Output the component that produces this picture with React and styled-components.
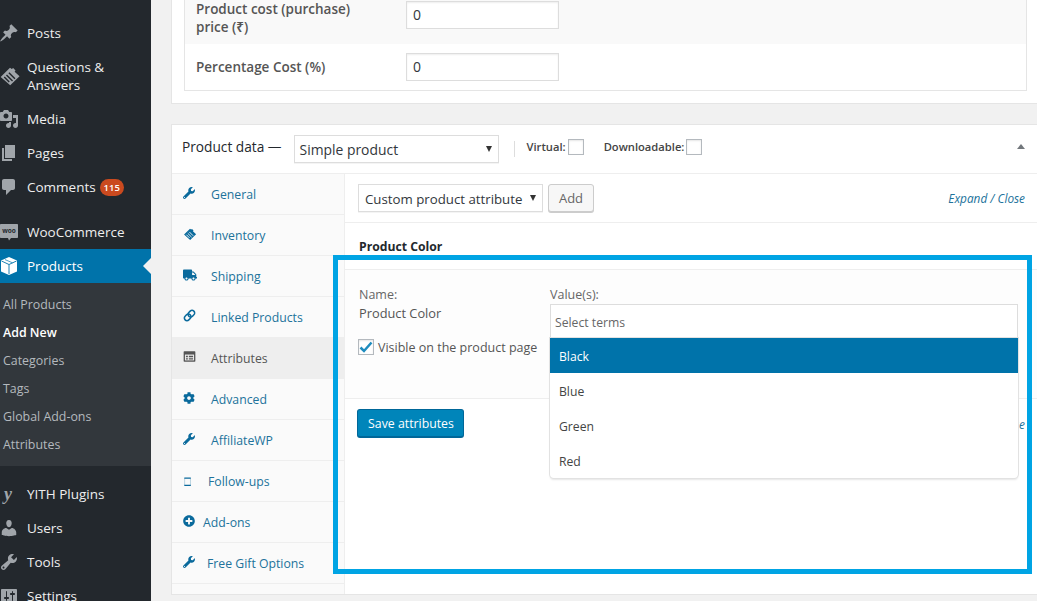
import React from 'react';
import styled, { createGlobalStyle } from 'styled-components';
import { FaWrench, FaTruck, FaCog, FaPlusCircle } from 'react-icons/fa';

const GlobalStyle = createGlobalStyle`
  html, body {
    margin: 0;
    height: 100%;
    overflow: hidden;
    background: #f1f1f1;
  }
  * {
    box-sizing: border-box;
  }
`;

const Page = styled.div`
  display: flex;
  width: 1037px;
  height: 601px;
  overflow: hidden;
  font-family: "Open Sans", "Noto Sans", sans-serif;
  font-size: 13px;
  color: #444;
`;

const Sidebar = styled.nav`
  flex: 0 0 151px;
  height: 601px;
  overflow: hidden;
  padding-top: 16px;
  background: #23282d;
`;

const MenuItem = styled.div`
  position: relative;
  display: flex;
  align-items: center;
  height: ${props => props.$tall ? '52px' : '34px'};
  line-height: 18px;
  font-size: 13.5px;
  color: ${props => props.$active ? '#fff' : '#eee'};
  background: ${props => props.$active ? '#0073aa' : 'transparent'};
`;

const MenuIcon = styled.span`
  flex: 0 0 27px;
  width: 27px;
  min-width: 0;
  display: flex;
  align-items: center;
  color: ${props => props.$active ? '#fff' : '#a0a5aa'};

  svg {
    display: block;
    flex: none;
    margin-left: -1px;
    fill: currentColor;
  }
`;

const YithGlyph = styled.span`
  padding-left: 4px;
  font-family: "Liberation Serif", serif;
  font-size: 18px;
  font-style: italic;
  font-weight: 700;
  line-height: 18px;
`;

const Badge = styled.span`
  margin-left: 4px;
  width: 24px;
  height: 17px;
  border-radius: 9px;
  background: #ca4a1f;
  color: #fff;
  font-size: 9.5px;
  font-weight: 600;
  line-height: 17px;
  text-align: center;
`;

const CurrentArrow = styled.span`
  position: absolute;
  right: 0;
  top: 9px;
  border: 8px solid transparent;
  border-left-width: 0;
  border-right-color: #f1f1f1;
`;

const Separator = styled.div`
  height: 11px;
`;

const SubMenu = styled.div`
  padding: 8px 0 7px 3px;
  background: #32373c;
`;

const SubItem = styled.div`
  height: 28px;
  line-height: 28px;
  font-size: 12.4px;
  font-weight: ${props => props.$current ? 600 : 400};
  color: ${props => props.$current ? '#fff' : '#b4b9be'};
`;

const Main = styled.main`
  flex: 1;
  min-width: 0;
  padding-left: 20px;
`;

const CostPanel = styled.section`
  height: 104px;
  padding: 0 10px 0 12px;
  background: #fff;
  border-left: 1px solid #e5e5e5;
  border-bottom: 1px solid #e5e5e5;
`;

const CostTable = styled.div`
  border: 1px solid #e5e5e5;
  border-top: 0;
`;

const CostRow = styled.div`
  display: flex;
  align-items: ${props => props.$alt ? 'flex-start' : 'center'};
  height: ${props => props.$alt ? '44px' : '46px'};
  padding: ${props => props.$alt ? '1px 0 0 11px' : '0 0 0 11px'};
  background: ${props => props.$alt ? '#f9f9f9' : '#fff'};
`;

const CostLabel = styled.label`
  flex: 0 0 210px;
  padding-right: 40px;
  margin-top: ${props => props.$alt ? '-1px' : '0'};
  font-size: 13.5px;
  font-weight: 600;
  line-height: 18px;
  color: #555;
`;

const CostInput = styled.div`
  width: 153px;
  height: 28px;
  padding-left: 6px;
  border: 1px solid #ddd;
  background: #fff;
  box-shadow: inset 0 1px 2px rgba(0, 0, 0, 0.07);
  font-size: 14px;
  line-height: 26px;
  color: #32373c;
`;

const DataPanel = styled.section`
  position: relative;
  height: 471px;
  margin-top: 20px;
  background: #fff;
  border: 1px solid #e5e5e5;
  border-right: 0;
`;

const DataHeader = styled.header`
  display: flex;
  align-items: center;
  height: 49px;
  padding: 0 12px 0 10px;
  border-bottom: 1px solid #eee;
`;

const DataTitle = styled.h2`
  margin: -5px 12px 0 0;
  font-size: 13.7px;
  font-weight: 400;
  color: #23282d;
  white-space: nowrap;
`;

const SelectBox = styled.div`
  display: flex;
  align-items: center;
  justify-content: space-between;
  flex: none;
  width: ${props => props.$wide ? '205px' : '185px'};
  height: 28px;
  padding: ${props => props.$wide ? '0 6px 0 5px' : '1px 6px 0 6px'};
  background: #fff;
  border: 1px solid #ddd;
  box-shadow: 0 1px 0 #f4f4f4;
  font-size: ${props => props.$wide ? '13.9px' : '13.25px'};
  color: #32373c;
  white-space: nowrap;
`;

const SelectArrow = styled.span`
  width: 0;
  height: 0;
  margin-top: -1px;
  border-left: 3.5px solid transparent;
  border-right: 3.5px solid transparent;
  border-top: 6px solid #333;
`;

const HeaderDivider = styled.span`
  width: 1px;
  height: 16px;
  margin: 0 12px 0 15px;
  background: #ddd;
`;

const CheckLabel = styled.label`
  display: flex;
  align-items: center;
  margin-right: ${props => props.$gap || 0}px;
  margin-top: -5px;
  font-size: 11.2px;
  font-weight: 600;
  color: #444;
`;

const Check = styled.span`
  display: inline-flex;
  align-items: center;
  justify-content: center;
  flex: none;
  width: 16px;
  height: 16px;
  margin-left: 2px;
  background: #fff;
  border: 1px solid #b4b9be;
  box-shadow: inset 0 1px 2px rgba(0, 0, 0, 0.1);
`;

const Collapse = styled.span`
  margin-left: auto;
  margin-top: -5px;
  width: 0;
  height: 0;
  border-left: 4px solid transparent;
  border-right: 4px solid transparent;
  border-bottom: 5px solid #72777c;
`;

const DataBody = styled.div`
  display: flex;
  height: 420px;
`;

const Tabs = styled.ul`
  flex: 0 0 173px;
  margin: 0;
  padding: 0;
  list-style: none;
  background: #fafafa;
  border-right: 1px solid #eee;
`;

const Tab = styled.li`
  display: flex;
  align-items: center;
  height: 41px;
  padding-left: 11px;
  border-bottom: 1px solid #eee;
  background: ${props => props.$active ? '#eee' : 'transparent'};
  color: ${props => props.$active ? '#555' : '#21729b'};
  font-size: 12.25px;
`;

const TabIcon = styled.span`
  display: flex;
  flex: 0 0 ${props => props.$width || 28}px;
  margin-top: -3px;
  color: ${props => props.$active ? '#555' : '#0a6a9c'};

  svg {
    display: block;
    fill: currentColor;
  }
`;

const Content = styled.div`
  flex: 1;
  min-width: 0;
`;

const Toolbar = styled.div`
  display: flex;
  align-items: center;
  height: 49px;
  padding: 0 12px 0 13px;
  border-bottom: 1px solid #eee;
`;

const AddButton = styled.button`
  width: 46px;
  height: 28px;
  margin: -1px 0 0 5px;
  padding: 0;
  background: #f7f7f7;
  border: 1px solid #ccc;
  border-radius: 3px;
  box-shadow: 0 1px 0 #ccc;
  font: inherit;
  font-size: 13px;
  color: #666;
`;

const ExpandLink = styled.span`
  margin-left: auto;
  font-size: 11.8px;
  font-style: italic;
  color: #21729b;
`;

const AttrHead = styled.h3`
  height: 47px;
  margin: 0;
  padding: 15px 0 0 14px;
  border-bottom: 1px solid #eee;
  font-size: 12.2px;
  line-height: 18px;
  font-weight: 700;
  color: #23282d;
`;

const AttrBody = styled.div`
  display: grid;
  grid-template-columns: 192px 468px;
  height: 129px;
  padding: 16px 0 0 13px;
  background: #fdfdfd;
  border-bottom: 1px solid #eee;
`;

const FieldLabel = styled.div`
  padding-left: ${props => props.$inset ? '1px' : '0'};
  font-size: 12.5px;
  line-height: 18px;
  color: #666;
`;

const FieldValue = styled.div`
  margin-bottom: 17px;
  padding-left: 1px;
  font-size: 12.8px;
  line-height: 18px;
  color: #555;
`;

const VisibleRow = styled.label`
  display: flex;
  align-items: center;
  height: 16px;
  font-size: 12.5px;
  color: #555;
  white-space: nowrap;

  ${Check} {
    margin: 0 4px 0 0;
  }
`;

const TermsField = styled.div`
  position: relative;
  height: 34px;
  padding-left: 4px;
  background: #fff;
  border: 1px solid #ddd;
  font-size: 12.2px;
  line-height: 35px;
  color: #666;
`;

const Dropdown = styled.ul`
  position: absolute;
  z-index: 2;
  top: 33px;
  left: -1px;
  right: -1px;
  margin: 0;
  padding: 0;
  list-style: none;
  background: #fff;
  border-radius: 0 0 4px 4px;
  box-shadow: 0 0 0 1px #e2e2e2, 0 2px 2px rgba(0, 0, 0, 0.1);
`;

const Option = styled.li`
  height: 35px;
  padding-left: 9px;
  background: ${props => props.$highlighted ? '#0073aa' : 'transparent'};
  color: ${props => props.$highlighted ? '#fff' : '#444'};
  font-size: 12.2px;
  line-height: 38px;
`;

const SaveRow = styled.div`
  display: flex;
  align-items: center;
  height: 48px;
  padding: 1px 12px 0 12px;
`;

const SaveButton = styled.button`
  width: 107px;
  height: 29px;
  padding: 0 0 0 1px;
  background: #0085ba;
  border: 1px solid #006799;
  border-bottom-width: 2px;
  border-radius: 3px;
  color: #fff;
  font: inherit;
  font-size: 12.3px;
`;

const Highlight = styled.div`
  position: absolute;
  z-index: 3;
  left: 161px;
  top: 130px;
  width: 699px;
  height: 319px;
  border: 5px solid #00a4e4;
  pointer-events: none;
`;

const Icon = ({ size = 20, children, ...rest }) => (
  <svg width={size} height={size} viewBox="0 0 20 20" {...rest}>{children}</svg>
);

const PinIcon = () => (
  <Icon><path d="M10.44 3.02l1.82-1.82 6.36 6.35-1.83 1.82c-1.05-.68-2.48-.57-3.41.36l-.75.75c-.92.93-1.04 2.35-.35 3.41l-1.83 1.82-2.41-2.41-2.8 2.79c-.42.42-3.38 2.71-3.8 2.29s1.86-3.39 2.28-3.81l2.79-2.79L4.1 9.36l1.83-1.82c1.05.69 2.48.57 3.4-.36l.75-.75c.93-.92 1.05-2.35.36-3.41z" /></Icon>
);

const TagIcon = ({ size = 22, hatch = '#23282d' }) => (
  <Icon size={size}>
    <path d="M10 2.500l1.600 1.200 1.300-.9 2.100 2.100-.8 1.200 4.500 4.200-8.500 8.200L1.500 10.800z" />
    <path d="M9 7l5.500 5.500M6.800 9l5.500 5.500M4.800 11l4.500 4.500" stroke={hatch} strokeWidth="1.300" fill="none" />
  </Icon>
);

const MediaIcon = () => (
  <Icon><path d="M13 11V4c0-.55-.45-1-1-1h-1.67L9 1H5L3.67 3H2c-.55 0-1 .45-1 1v7c0 .55.45 1 1 1h10c.55 0 1-.45 1-1zM7 4.5c1.38 0 2.5 1.12 2.5 2.5S8.38 9.5 7 9.5 4.5 8.38 4.5 7 5.62 4.5 7 4.5zM14 6h5v10.5c0 1.38-1.12 2.5-2.5 2.5S14 17.88 14 16.5s1.12-2.5 2.5-2.5c.17 0 .34.02.5.05V9h-3V6zm-4 8.05V13h2v3.5c0 1.38-1.12 2.5-2.5 2.5S7 17.88 7 16.5 8.12 14 9.5 14c.17 0 .34.02.5.05z" /></Icon>
);

const PagesIcon = () => (
  <Icon><path d="M6 15V2h10v13H6zm-1 1h8v2H3V5h2v11z" /></Icon>
);

const CommentsIcon = () => (
  <Icon><path d="M5 2h9c1.1 0 2 .9 2 2v7c0 1.1-.9 2-2 2h-2l-5 5v-5H5c-1.1 0-2-.9-2-2V4c0-1.1.9-2 2-2z" /></Icon>
);

const WooIcon = () => (
  <Icon>
    <path d="M2 2h16c.6 0 1 .4 1 1v12c0 .6-.4 1-1 1h-6l-2 2.500L9 16H2c-.6 0-1-.4-1-1V3c0-.6.4-1 1-1z" />
    <text x="10" y="11" textAnchor="middle" fontSize="6.500" fontWeight="700" fontFamily="Open Sans, sans-serif" fill="#23282d">woo</text>
  </Icon>
);

const CubeIcon = () => (
  <Icon>
    <path d="M10 1l8 3.500v11L10 19l-8-3.500v-11z" />
    <path d="M2.500 5L10 8.500 17.500 5M10 8.500V18" stroke="#0073aa" strokeWidth="0.9" fill="none" />
    <path d="M6 3.600l7.500 3.200" stroke="#0073aa" strokeWidth="0.7" fill="none" />
  </Icon>
);

const UsersIcon = () => (
  <Icon><path d="M10 9.25c-2.27 0-2.73-3.44-2.73-3.44C7 4.02 7.82 2 9.97 2c2.16 0 2.98 2.02 2.71 3.81 0 0-.41 3.44-2.68 3.44zm0 2.57L12.72 10c2.39 0 4.52 2.33 4.52 4.53v2.49s-3.65 1.13-7.24 1.13c-3.65 0-7.24-1.13-7.24-1.13v-2.49c0-2.25 1.94-4.48 4.47-4.48z" /></Icon>
);

const ToolsIcon = () => (
  <Icon><path d="M16.68 9.77c-1.34 1.34-3.3 1.67-4.95.99l-5.41 6.52c-.99.99-2.59.99-3.58 0s-.99-2.59 0-3.57l6.52-5.42c-.68-1.65-.35-3.61.99-4.95 1.28-1.28 3.12-1.62 4.72-1.06l-2.89 2.89 2.82 2.82 2.86-2.87c.53 1.58.18 3.39-1.08 4.65zM3.81 16.21c.4.39 1.04.39 1.43 0 .4-.4.4-1.04 0-1.43-.39-.4-1.03-.4-1.43 0-.39.39-.39 1.03 0 1.43z" /></Icon>
);

const SettingsIcon = () => (
  <Icon><path d="M18 16V4c0-.55-.45-1-1-1H3c-.55 0-1 .45-1 1v12c0 .55.45 1 1 1h14c.55 0 1-.45 1-1zM8 11h1c.55 0 1 .45 1 1s-.45 1-1 1H8v1.5c0 .28-.22.5-.5.5s-.5-.22-.5-.5V13H6c-.55 0-1-.45-1-1s.45-1 1-1h1V5.5c0-.28.22-.5.5-.5s.5.22.5.5V11zm5-2h-1c-.55 0-1-.45-1-1s.45-1 1-1h1V5.500c0-.28.22-.5.5-.5s.5.22.5.5V7h1c.55 0 1 .45 1 1s-.45 1-1 1h-1v5.500c0 .28-.22.5-.5.5s-.5-.22-.5-.5V9z" /></Icon>
);

const LinkIcon = () => (
  <Icon size={13}>
    <g transform="rotate(-45 10 10)" fill="none" stroke="currentColor" strokeWidth="2.400">
      <rect x="0.500" y="6" width="11" height="8" rx="4" />
      <rect x="8.500" y="6" width="11" height="8" rx="4" />
    </g>
  </Icon>
);

const AttributesIcon = () => (
  <Icon size={13}>
    <path d="M2 2h16c.6 0 1 .4 1 1v14c0 .6-.4 1-1 1H2c-.6 0-1-.4-1-1V3c0-.6.4-1 1-1z" />
    <path d="M3 7h14v9H3z" fill="#eee" />
    <path d="M4.500 9h3v2h-3zM9 9h6.500v2H9zM4.500 12.500h3v2h-3zM9 12.500h6.500v2H9z" />
  </Icon>
);

const FollowUpsIcon = () => (
  <Icon size={13}>
    <path d="M2 8h10M2 19h10" stroke="currentColor" strokeWidth="1.800" fill="none" />
    <path d="M2.500 8v11M11.500 8v11" stroke="currentColor" strokeWidth="0.800" fill="none" opacity="0.5" />
  </Icon>
);

const CheckMark = () => (
  <svg width="14" height="14" viewBox="0 0 14 14">
    <path d="M1.500 7.500l3.500 3.500L12.500 2.500" stroke="#1e8cbe" strokeWidth="2.500" fill="none" />
  </svg>
);

const tabs = [
  { label: 'General', icon: <FaWrench size={12} /> },
  { label: 'Inventory', icon: <TagIcon size={14} hatch="#fafafa" /> },
  { label: 'Shipping', icon: <FaTruck size={14} /> },
  { label: 'Linked Products', icon: <LinkIcon /> },
  { label: 'Attributes', icon: <AttributesIcon />, active: true },
  { label: 'Advanced', icon: <FaCog size={12} /> },
  { label: 'AffiliateWP', icon: <FaWrench size={12} /> },
  { label: 'Follow-ups', icon: <FollowUpsIcon />, width: 25 },
  { label: 'Add-ons', icon: <FaPlusCircle size={12} />, width: 20 },
  { label: 'Free Gift Options', icon: <FaWrench size={12} />, width: 24 },
];

function App() {
  return (
    <Page>
      <GlobalStyle />
      <Sidebar>
        <MenuItem><MenuIcon><PinIcon /></MenuIcon>Posts</MenuItem>
        <MenuItem $tall><MenuIcon><TagIcon /></MenuIcon><span>Questions &amp;<br />Answers</span></MenuItem>
        <MenuItem><MenuIcon><MediaIcon /></MenuIcon>Media</MenuItem>
        <MenuItem><MenuIcon><PagesIcon /></MenuIcon>Pages</MenuItem>
        <MenuItem><MenuIcon><CommentsIcon /></MenuIcon>Comments<Badge>115</Badge></MenuItem>
        <Separator />
        <MenuItem><MenuIcon><WooIcon /></MenuIcon>WooCommerce</MenuItem>
        <MenuItem $active><MenuIcon $active><CubeIcon /></MenuIcon>Products<CurrentArrow /></MenuItem>
        <SubMenu>
          <SubItem>All Products</SubItem>
          <SubItem $current>Add New</SubItem>
          <SubItem>Categories</SubItem>
          <SubItem>Tags</SubItem>
          <SubItem>Global Add-ons</SubItem>
          <SubItem>Attributes</SubItem>
        </SubMenu>
        <Separator />
        <MenuItem><MenuIcon><YithGlyph>y</YithGlyph></MenuIcon>YITH Plugins</MenuItem>
        <MenuItem><MenuIcon><UsersIcon /></MenuIcon>Users</MenuItem>
        <MenuItem><MenuIcon><ToolsIcon /></MenuIcon>Tools</MenuItem>
        <MenuItem><MenuIcon><SettingsIcon /></MenuIcon>Settings</MenuItem>
      </Sidebar>

      <Main>
        <CostPanel>
          <CostTable>
            <CostRow $alt>
              <CostLabel $alt>Product cost (purchase) price (₹)</CostLabel>
              <CostInput>0</CostInput>
            </CostRow>
            <CostRow>
              <CostLabel>Percentage Cost (%)</CostLabel>
              <CostInput>0</CostInput>
            </CostRow>
          </CostTable>
        </CostPanel>

        <DataPanel>
          <DataHeader>
            <DataTitle>Product data —</DataTitle>
            <SelectBox $wide>Simple product<SelectArrow /></SelectBox>
            <HeaderDivider />
            <CheckLabel $gap={20}>Virtual:<Check /></CheckLabel>
            <CheckLabel>Downloadable:<Check /></CheckLabel>
            <Collapse />
          </DataHeader>
          <DataBody>
            <Tabs>
              {tabs.map(tab => (
                <Tab key={tab.label} $active={tab.active}>
                  <TabIcon $active={tab.active} $width={tab.width}>{tab.icon}</TabIcon>
                  {tab.label}
                </Tab>
              ))}
            </Tabs>
            <Content>
              <Toolbar>
                <SelectBox>Custom product attribute<SelectArrow /></SelectBox>
                <AddButton>Add</AddButton>
                <ExpandLink>Expand / Close</ExpandLink>
              </Toolbar>
              <AttrHead>Product Color</AttrHead>
              <AttrBody>
                <div>
                  <FieldLabel $inset>Name:</FieldLabel>
                  <FieldValue>Product Color</FieldValue>
                  <VisibleRow><Check><CheckMark /></Check>Visible on the product page</VisibleRow>
                </div>
                <div>
                  <FieldLabel>Value(s):</FieldLabel>
                  <TermsField>
                    Select terms
                    <Dropdown>
                      <Option $highlighted>Black</Option>
                      <Option>Blue</Option>
                      <Option>Green</Option>
                      <Option>Red</Option>
                    </Dropdown>
                  </TermsField>
                </div>
              </AttrBody>
              <SaveRow>
                <SaveButton>Save attributes</SaveButton>
                <ExpandLink>Expand / Close</ExpandLink>
              </SaveRow>
            </Content>
          </DataBody>
          <Highlight />
        </DataPanel>
      </Main>
    </Page>
  );
}

export default App;
